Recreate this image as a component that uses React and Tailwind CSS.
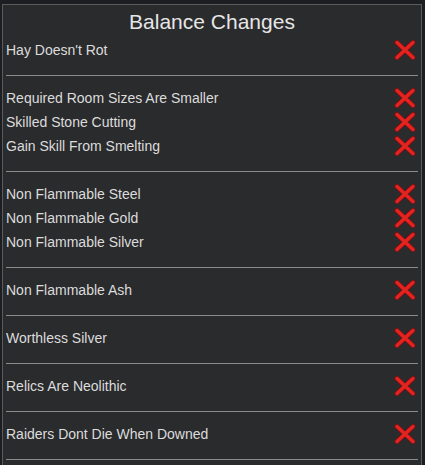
import React from 'react';

const groups = [
  ["Hay Doesn't Rot"],
  ['Required Room Sizes Are Smaller', 'Skilled Stone Cutting', 'Gain Skill From Smelting'],
  ['Non Flammable Steel', 'Non Flammable Gold', 'Non Flammable Silver'],
  ['Non Flammable Ash'],
  ['Worthless Silver'],
  ['Relics Are Neolithic'],
  ['Raiders Dont Die When Downed'],
];

const RedX = () => (
  <svg width="22" height="20" viewBox="0 0 22 20" className="shrink-0">
    <g strokeLinecap="round">
      <line x1="3" y1="2.5" x2="19" y2="17.5" stroke="#7a1212" strokeWidth="5" />
      <line x1="19" y1="2.5" x2="3" y2="17.5" stroke="#7a1212" strokeWidth="5" />
      <line x1="3" y1="2.5" x2="19" y2="17.5" stroke="#e3231f" strokeWidth="3.4" />
      <line x1="19" y1="2.5" x2="3" y2="17.5" stroke="#e3231f" strokeWidth="3.4" />
    </g>
  </svg>
);

const Row = ({ label }) => (
  <div className="flex items-center justify-between h-[24px] pl-[3px] pr-[5px]">
    <span className="text-[14px] text-[#dcdcdc] leading-none">{label}</span>
    <RedX />
  </div>
);

export default function App() {
  return (
    <div
      className="w-[425px] h-[465px] bg-[#1c1e22] pt-[4px] pl-[2px] overflow-hidden"
      style={{ fontFamily: '"Liberation Sans", Arial, sans-serif' }}
    >
      <div className="w-[420px] h-[480px] border border-[#5a5b5d] bg-[#2a2b2d]">
        <div className="h-[33px] flex items-center justify-center text-[21px] text-[#e6e6e6]">
          Balance Changes
        </div>
        {groups.map((g, i) => (
          <div key={i} className={i === 0 ? '' : 'pt-[10px]'}>
            {g.map((label) => (
              <Row key={label} label={label} />
            ))}
            <div className="mt-[13px] mx-[3px] h-px bg-[#8c8c8c]" />
          </div>
        ))}
      </div>
    </div>
  );
}
